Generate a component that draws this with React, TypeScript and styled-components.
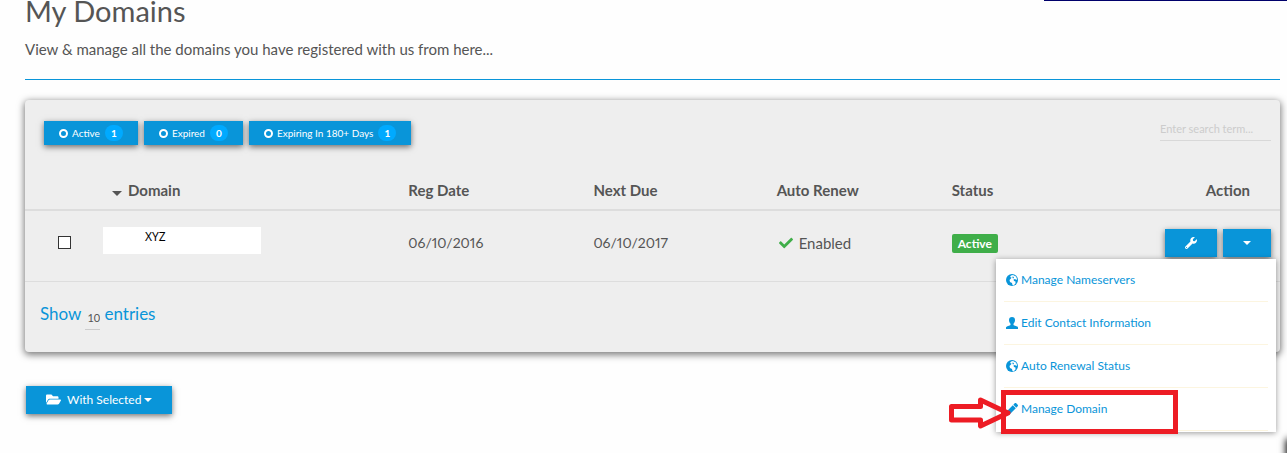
import React from "react";
import styled, { createGlobalStyle } from "styled-components";
import { FaWrench, FaCheck, FaFolderOpen, FaPen } from "react-icons/fa";

const blue = "#0995d9";

const GlobalStyle = createGlobalStyle`
  * { box-sizing: border-box; }
  body {
    margin: 0;
    background: #fefefe;
    color: #555;
    font-family: Lato, "Liberation Sans", sans-serif;
    font-size: 15px;
    line-height: 20px;
  }
  button, input, select { font: inherit; border-radius: 0; }
`;

const Page = styled.div`
  position: relative;
  min-height: 100vh;
  padding: 0 7px 0 25px;
  overflow: hidden;
`;

const TopRule = styled.div`
  position: absolute;
  top: 0;
  right: 0;
  width: 243px;
  height: 1px;
  background: #00006b;
`;

const CornerShade = styled.div`
  position: absolute;
  top: 440px;
  left: 100%;
  width: 40px;
  height: 40px;
  box-shadow: 0 0 7px 1px #000;
`;

const PageHeader = styled.header`
  height: 80px;
  border-bottom: 1px solid ${blue};
`;

const Title = styled.h1`
  margin: 0 0 17px;
  font-size: 29px;
  line-height: 22px;
  font-weight: 400;
`;

const Intro = styled.p`
  margin: 0;
`;

const Panel = styled.section`
  margin-top: 20px;
  background: #eee;
  border-radius: 4px;
  box-shadow: 0 2px 7px 1px rgba(0, 0, 0, 0.5);
`;

const Toolbar = styled.div`
  display: flex;
  justify-content: space-between;
  align-items: center;
  height: 70px;
  padding: 0 9px 4px 19px;
`;

const Filters = styled.div`
  display: flex;
  gap: 6px;
`;

const Button = styled.button`
  display: inline-flex;
  align-items: center;
  justify-content: center;
  height: 28px;
  padding: 0 20px;
  border: 0;
  background: ${blue};
  color: #fff;
  font-size: 12px;
  white-space: nowrap;
  box-shadow: 0 2px 6px rgba(0, 0, 0, 0.55);
`;

const FilterButton = styled(Button)`
  height: 24px;
  padding: 0 15px;
  font-size: 10px;
`;

const Ring = styled.span`
  width: 9px;
  height: 9px;
  margin-right: 4px;
  border: 2px solid #fff;
  border-radius: 50%;
`;

const Count = styled.span`
  min-width: 18px;
  margin-left: 5px;
  padding: 0 6px;
  border-radius: 8px;
  background: #00aaff;
  font-weight: 700;
  line-height: 16px;
`;

const Search = styled.input`
  width: 111px;
  height: 24px;
  margin-bottom: 8px;
  padding: 0;
  border: 0;
  border-bottom: 1px solid #d8d8d8;
  background: transparent;
  font-size: 11px;
  &::placeholder { color: #ccc; opacity: 1; }
`;

const Table = styled.table`
  width: 100%;
  table-layout: fixed;
  border-collapse: collapse;
`;

const Col = styled.col<{ $w?: string }>`
  width: ${(p) => p.$w || "auto"};
`;

const Th = styled.th<{ $align?: string; $pad?: number }>`
  height: 40px;
  padding: 0 ${(p) => (p.$align === "right" ? 30 : 8)}px 0 ${(p) => p.$pad || 8}px;
  border-bottom: 2px solid #ddd;
  text-align: ${(p) => p.$align || "left"};
  font-weight: 700;
`;

const Td = styled.td<{ $align?: string }>`
  height: 71px;
  padding: 0 8px 6px;
  border-bottom: 1px solid #ddd;
  text-align: ${(p) => p.$align || "left"};
`;

const DateText = styled.time`
  font-size: 14px;
  font-variant-numeric: proportional-nums;
`;

const Caret = styled.span<{ $size: number }>`
  display: inline-block;
  border: ${(p) => p.$size}px solid transparent;
  border-top-color: currentColor;
  border-bottom: 0;
`;

const SortCaret = styled(Caret)`
  margin-right: 6px;
`;

const CheckBox = styled.input`
  display: block;
  appearance: none;
  width: 13px;
  height: 13px;
  margin: 0 0 0 25px;
  border: 1px solid #333;
  background: #fff;
`;

const DomainName = styled.div`
  width: 158px;
  height: 27px;
  padding-left: 42px;
  margin-top: -5px;
  background: #fff;
  color: #000;
  font-family: "Noto Sans", sans-serif;
  font-size: 12px;
`;

const Enabled = styled.span`
  display: flex;
  align-items: center;
  gap: 6px;
  padding-left: 2px;
  svg { color: #3fae49; }
`;

const Label = styled.span`
  display: inline-block;
  padding: 0 6px;
  border-radius: 2px;
  background: #3fae49;
  color: #fff;
  font-size: 12px;
  font-weight: 700;
  line-height: 19px;
`;

const Actions = styled.div`
  position: relative;
  display: flex;
  justify-content: flex-end;
  gap: 6px;
  margin-right: 1px;
`;

const Menu = styled.ul`
  position: absolute;
  z-index: 1;
  top: 30px;
  right: -5px;
  width: 280px;
  margin: 0;
  padding: 0 8px 1px;
  list-style: none;
  text-align: left;
  background: #fff;
  box-shadow: 0 1px 6px rgba(0, 0, 0, 0.4);
`;

const MenuItem = styled.li`
  border-bottom: 1px solid #fcf5e0;
`;

const MenuLink = styled.a`
  display: flex;
  align-items: center;
  gap: 3px;
  height: 42px;
  padding-left: 2px;
  color: ${blue};
  font-size: 12px;
  text-decoration: none;
`;

const Highlight = styled.svg`
  position: absolute;
  left: -48px;
  top: 130px;
`;

const Footer = styled.label`
  display: flex;
  align-items: center;
  gap: 4px;
  height: 70px;
  padding: 0 15px 6px;
  color: ${blue};
  font-size: 17px;
`;

const PageSize = styled.select`
  appearance: none;
  width: 15px;
  height: 22px;
  margin-top: 10px;
  padding: 0 0 0 2px;
  border: 0;
  border-bottom: 1px solid #ccc;
  background: transparent;
  color: #555;
  font-size: 11px;
`;

const BulkButton = styled(Button)`
  gap: 3px;
  margin: 34px 1px 39px;
  svg { margin-right: 3px; }
`;

function Globe() {
  return (
    <svg width="12" height="12" viewBox="0 0 24 24" fill="none" aria-hidden="true">
      <circle cx="12" cy="12" r="12" fill={blue} />
      <path d="M10 3l4-1 6 3 2 5-1 2-3-2-3 1 1 3 3 1v4l-4 4-2-1-1-4-4-2-1-4 3-3 1-2-3-1z" fill="#fff" />
      <path d="M13 5l3 1-1 3-2-1z" fill={blue} />
    </svg>
  );
}

function Person() {
  return (
    <svg width="12" height="12" viewBox="0 0 24 24" fill="currentColor" aria-hidden="true">
      <path d="M12 0c4 0 6 2.500 6 6 0 3.500-1.500 6-3 7.500v2.500c1 1.500 8.500 2.500 9 5V24H0v-3c.5-2.500 8-3.500 9-5v-2.500C7.500 12 6 9.500 6 6c0-3.500 2-6 6-6z" />
    </svg>
  );
}

const filters = [
  { name: "Active", count: 1 },
  { name: "Expired", count: 0 },
  { name: "Expiring In 180+ Days", count: 1 },
];

const menu = [
  { text: "Manage Nameservers", icon: <Globe /> },
  { text: "Edit Contact Information", icon: <Person /> },
  { text: "Auto Renewal Status", icon: <Globe /> },
  { text: "Manage Domain", icon: <FaPen size={12} /> },
];

export default function App() {
  return (
    <Page>
      <GlobalStyle />
      <TopRule />
      <PageHeader>
        <Title>My Domains</Title>
        <Intro>View &amp; manage all the domains you have registered with us from here...</Intro>
      </PageHeader>

      <Panel>
        <Toolbar>
          <Filters>
            {filters.map((f) => (
              <FilterButton key={f.name} type="button">
                <Ring />
                {f.name}
                <Count>{f.count}</Count>
              </FilterButton>
            ))}
          </Filters>
          <Search type="search" placeholder="Enter search term..." aria-label="Search domains" />
        </Toolbar>

        <Table>
          <colgroup>
            <Col $w="70px" />
            <Col />
            <Col $w="14.75%" />
            <Col $w="14.6%" />
            <Col $w="13.95%" />
            <Col $w="14%" />
            <Col $w="12.8%" />
          </colgroup>
          <thead>
            <tr>
              <Th aria-label="Select" />
              <Th $pad={17}><SortCaret $size={5} />Domain</Th>
              <Th>Reg Date</Th>
              <Th>Next Due</Th>
              <Th>Auto Renew</Th>
              <Th>Status</Th>
              <Th $align="right">Action</Th>
            </tr>
          </thead>
          <tbody>
            <tr>
              <Td><CheckBox type="checkbox" aria-label="Select XYZ" /></Td>
              <Td><DomainName>XYZ</DomainName></Td>
              <Td><DateText>06/10/2016</DateText></Td>
              <Td><DateText>06/10/2017</DateText></Td>
              <Td><Enabled><FaCheck size={14} />Enabled</Enabled></Td>
              <Td><Label>Active</Label></Td>
              <Td $align="right">
                <Actions>
                  <Button type="button" aria-label="Manage"><FaWrench size={12} /></Button>
                  <Button type="button" aria-label="More actions"><Caret $size={4} /></Button>
                  <Menu>
                    {menu.map((m) => (
                      <MenuItem key={m.text}>
                        <MenuLink href="#">{m.icon}{m.text}</MenuLink>
                      </MenuItem>
                    ))}
                    <Highlight as="li" aria-hidden="true">
                      <svg width="232" height="46" fill="none" stroke="#ed1c24">
                        <rect x="55.500" y="3.500" width="172" height="39" strokeWidth="5" />
                        <path d="M3.500 17.500H32.500V11L60 24 32.500 37V31H3.500z" strokeWidth="5" strokeLinejoin="round" />
                      </svg>
                    </Highlight>
                  </Menu>
                </Actions>
              </Td>
            </tr>
          </tbody>
        </Table>

        <Footer>
          Show
          <PageSize defaultValue="10"><option>10</option></PageSize>
          entries
        </Footer>
      </Panel>

      <BulkButton type="button"><FaFolderOpen size={15} />With Selected<Caret $size={4} /></BulkButton>
      <CornerShade />
    </Page>
  );
}
